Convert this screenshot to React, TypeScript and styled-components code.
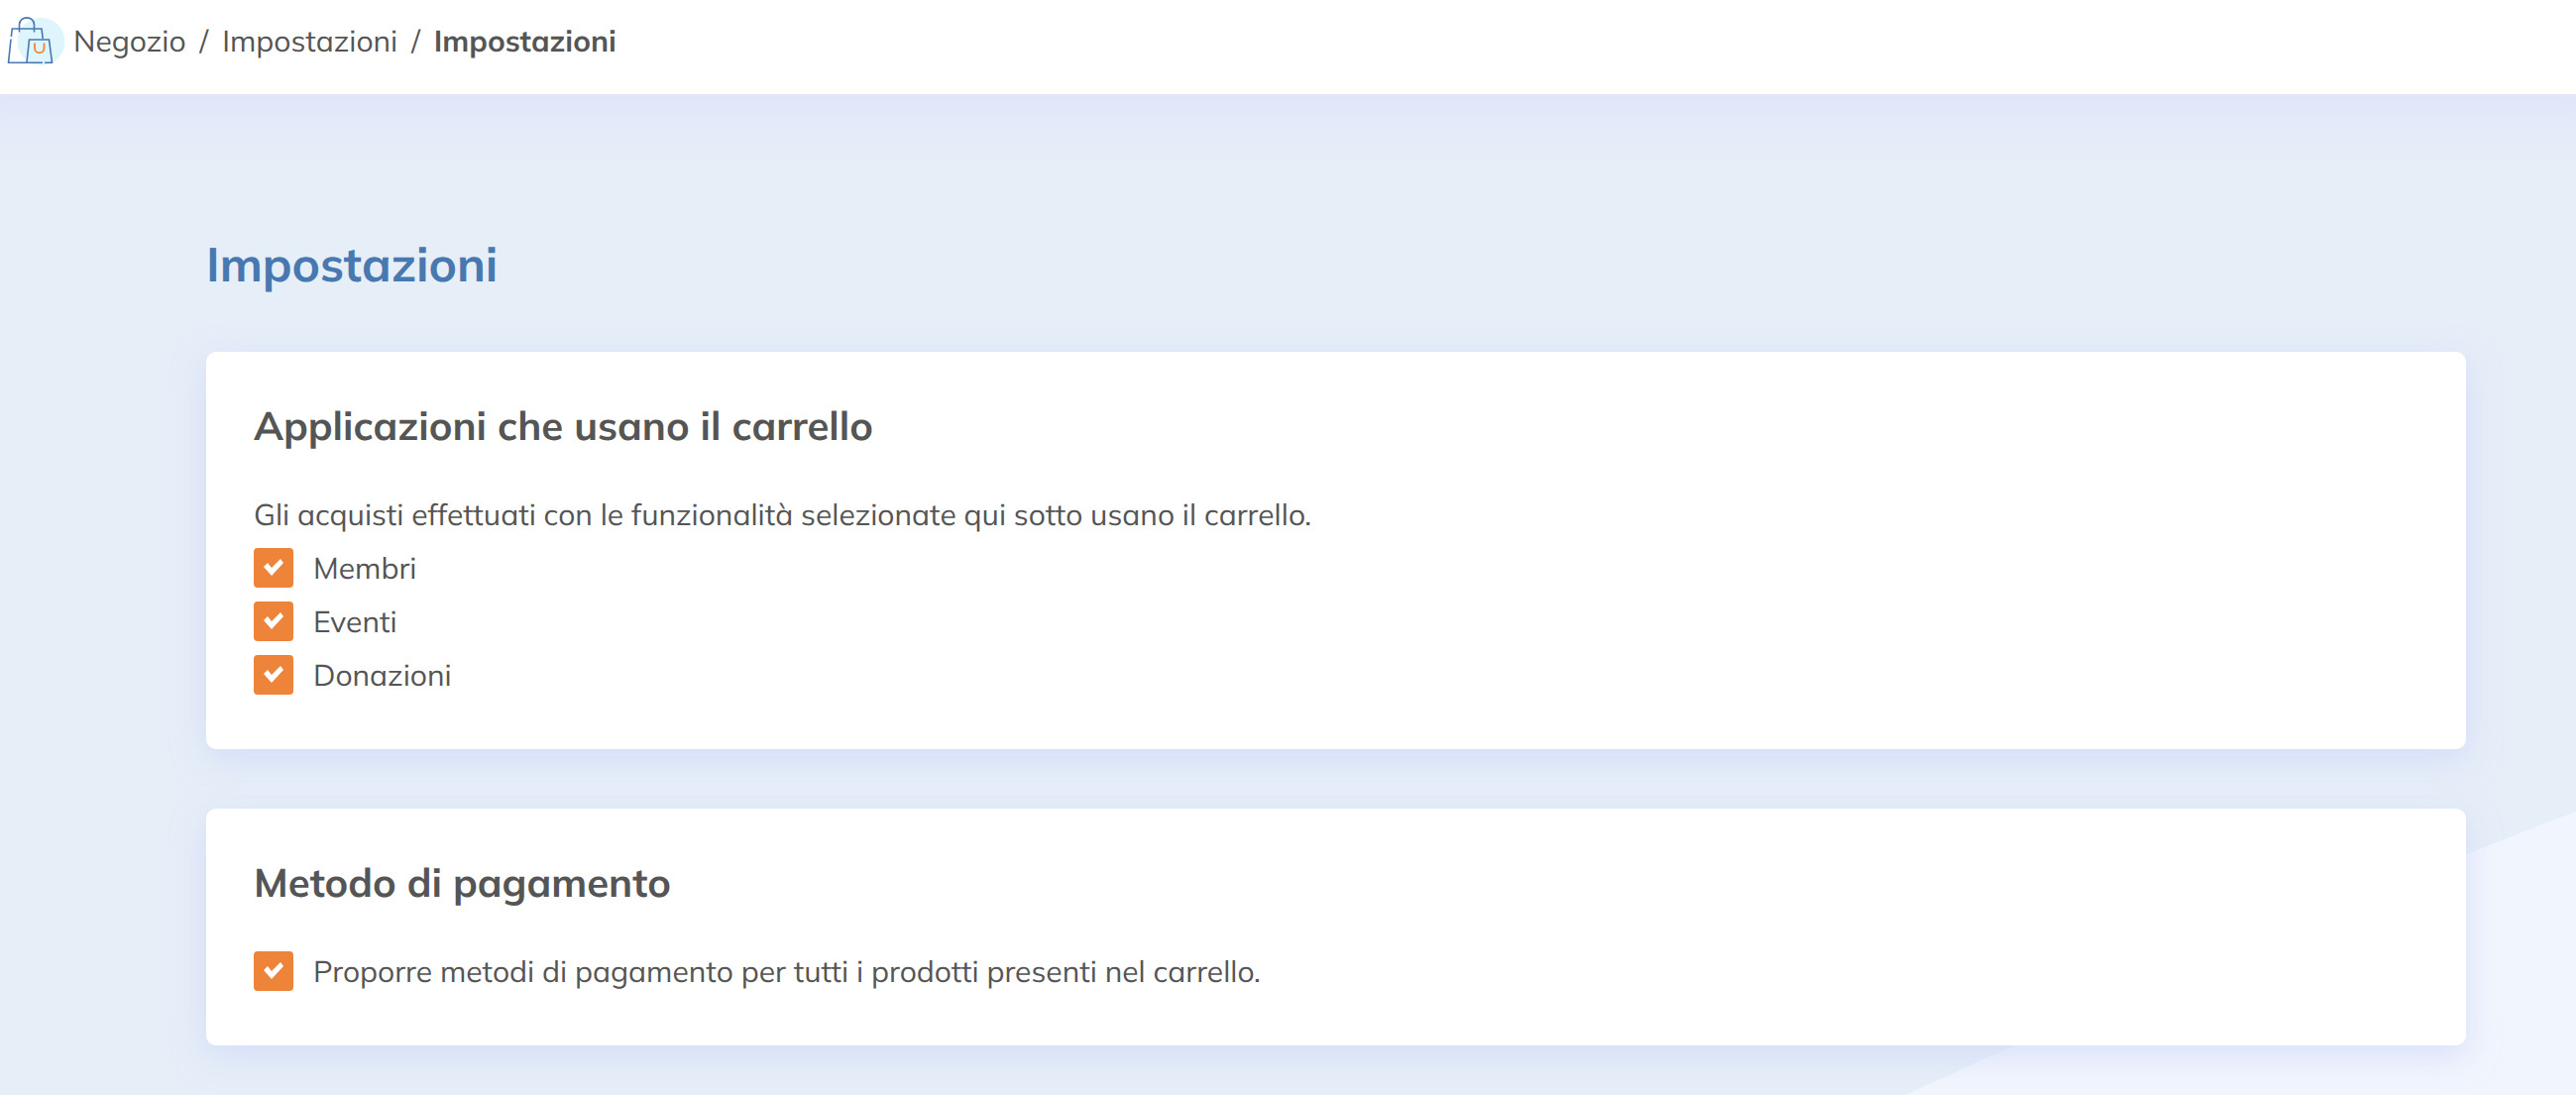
import React, { useState } from 'react';
import styled, { createGlobalStyle } from 'styled-components';

const GlobalStyle = createGlobalStyle`
  *, *::before, *::after { box-sizing: border-box; }
  body {
    margin: 0;
    background: #e6eef8;
    color: #555;
    font-family: Mulish, Lato, "Noto Sans", sans-serif;
    font-size: 30px;
    line-height: 54px;
    text-rendering: geometricPrecision;
  }
`;

const Page = styled.div`
  position: relative;
  display: flex;
  flex-direction: column;
  min-height: 100vh;
  overflow: hidden;
`;

const Backdrop = styled.svg`
  position: absolute;
  right: 0;
  bottom: 0;
  width: 677px;
  height: 286px;
`;

const Header = styled.header`
  position: relative;
  display: flex;
  align-items: flex-start;
  height: 95px;
  padding: 7px 6px;
  gap: 6px;
  background: #fff;
  box-shadow: 0 -16px 40px 40px rgba(212, 218, 250, 0.4);
`;

const BagIcon = styled.svg`
  flex: none;
  width: 62px;
  height: 66px;
`;

const Crumbs = styled.ol`
  display: flex;
  flex-wrap: wrap;
  margin: 0;
  padding: 7px 0;
  list-style: none;
`;

const Crumb = styled.li`
  & + &::before {
    content: '/';
    padding: 0 14px;
  }
`;

const CrumbLink = styled.a`
  color: inherit;
  text-decoration: none;
`;

const Current = styled.span`
  font-weight: 700;
`;

const Main = styled.main`
  position: relative;
  display: flex;
  flex-direction: column;
  padding: 139px 111px 50px 208px;
`;

const Title = styled.h1`
  margin: 0 0 57px;
  color: #4878b0;
  font-size: 48px;
  font-weight: 700;
  line-height: 64px;
`;

const Cards = styled.div`
  display: flex;
  flex-direction: column;
  gap: 60px;
`;

const Card = styled.section`
  padding: 48px;
  border-radius: 10px;
  background: #fff;
  box-shadow: 0 10px 32px rgba(200, 210, 248, 0.6);
`;

const CardTitle = styled.h2`
  margin: 0 0 36px;
  font-size: 40px;
  font-weight: 700;
  line-height: 53px;
`;

const Intro = styled.p`
  margin: 0;
`;

const Option = styled.label`
  display: flex;
  align-items: center;
  gap: 20px;
  cursor: pointer;
`;

const Tick = styled.input`
  appearance: none;
  flex: none;
  width: 40px;
  height: 40px;
  margin: 0;
  border: 2px solid #ee8439;
  border-radius: 4px;
  background: #fff;
  cursor: pointer;

  &:checked {
    background: #ee8439;
  }

  &:checked::before {
    content: '';
    display: block;
    width: 36px;
    height: 36px;
    background: #fff;
    clip-path: polygon(8px 17px, 12px 13px, 16px 18px, 25px 9px, 28px 13px, 16px 26px);
  }
`;

function CheckOption({ label }: { label: string }) {
  const [checked, setChecked] = useState(true);
  return (
    <Option>
      <Tick type="checkbox" checked={checked} onChange={(e) => setChecked(e.target.checked)} />
      <span>{label}</span>
    </Option>
  );
}

export default function App() {
  return (
    <Page>
      <GlobalStyle />
      <Backdrop viewBox="0 0 677 286" aria-hidden="true">
        <path d="M0 286 Q383 112 677 0 V286 Z" fill="#f1f5fd" />
      </Backdrop>
      <Header>
        <BagIcon viewBox="6 7 62 66" fill="none" strokeWidth="1.6" aria-hidden="true">
          <circle cx="41.5" cy="42" r="24" fill="#dff5fd" />
          <g stroke="#4878b4">
            <path d="M11.3 37 L12.3 29 H42 L43.2 39" />
            <path d="M11 39.5 L8.5 63.3 H43" />
            <path d="M19.5 32.5 V25 C19.5 15.5 34.5 15.5 34.5 25 V32.5" />
            <path d="M27 63 L29.5 40 H49.5 L52.5 63.3 H45" />
          </g>
          <path d="M35 43.5 V48.5 C35 55 44.5 55 44.5 48.5 V43.5" stroke="#ee8439" strokeWidth="1.8" />
        </BagIcon>
        <nav aria-label="Breadcrumb">
          <Crumbs>
            <Crumb><CrumbLink href="#negozio">Negozio</CrumbLink></Crumb>
            <Crumb><CrumbLink href="#impostazioni">Impostazioni</CrumbLink></Crumb>
            <Crumb><Current aria-current="page">Impostazioni</Current></Crumb>
          </Crumbs>
        </nav>
      </Header>
      <Main>
        <Title>Impostazioni</Title>
        <Cards>
          <Card>
            <CardTitle>Applicazioni che usano il carrello</CardTitle>
            <Intro>Gli acquisti effettuati con le funzionalità selezionate qui sotto usano il carrello.</Intro>
            <CheckOption label="Membri" />
            <CheckOption label="Eventi" />
            <CheckOption label="Donazioni" />
          </Card>
          <Card>
            <CardTitle>Metodo di pagamento</CardTitle>
            <CheckOption label="Proporre metodi di pagamento per tutti i prodotti presenti nel carrello." />
          </Card>
        </Cards>
      </Main>
    </Page>
  );
}
